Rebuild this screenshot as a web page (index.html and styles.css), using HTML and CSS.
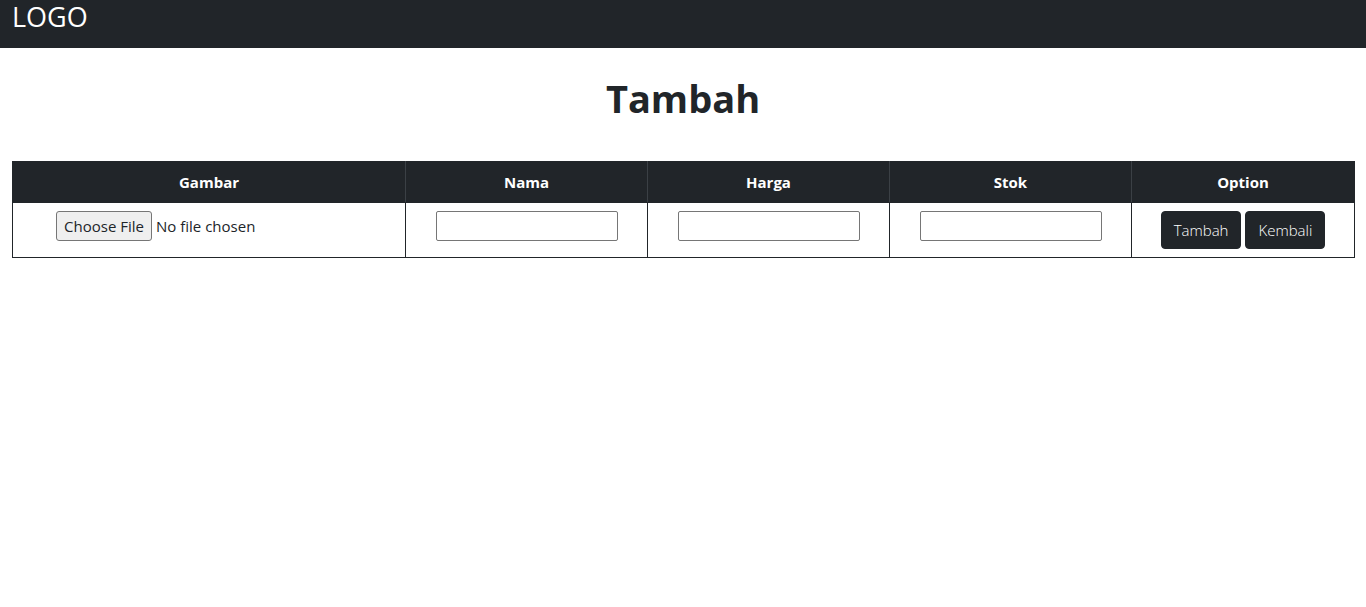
FILE: index.html
```html
<!DOCTYPE html>
<html lang="id">
<head>
<meta charset="utf-8">
<title>Tambah</title>
<link rel="stylesheet" href="styles.css">
</head>
<body>
<nav class="navbar"><span class="brand">LOGO</span></nav>
<main class="content">
  <h1 class="title">Tambah</h1>
  <table class="table">
    <colgroup>
      <col class="c-gambar"><col class="c-mid"><col class="c-mid"><col class="c-mid"><col class="c-opt">
    </colgroup>
    <thead>
      <tr><th>Gambar</th><th>Nama</th><th>Harga</th><th>Stok</th><th>Option</th></tr>
    </thead>
    <tbody>
      <tr>
        <td class="cell-file">
          <label class="file"><span class="file-btn">Choose File</span><span class="file-name">No file chosen</span></label>
        </td>
        <td><input class="field" type="text"></td>
        <td><input class="field" type="text"></td>
        <td><input class="field" type="text"></td>
        <td><div class="actions"><button class="btn">Tambah</button><button class="btn">Kembali</button></div></td>
      </tr>
    </tbody>
  </table>
</main>
</body>
</html>
```
FILE: styles.css
```css
* { box-sizing: border-box; }
body {
  margin: 0;
  font-family: "Open Sans", "Noto Sans", sans-serif;
  color: #212529;
  background: #fff;
  font-size: 16px;
  line-height: 1.5;
}
.navbar {
  height: 48px;
  background: #212529;
  padding: 0 12px;
}
.brand {
  color: #fff;
  font-size: 27px;
  line-height: 34px;
  display: block;
}
.content { padding: 0 12px; }
.title {
  margin: 27px 0 40px;
  text-align: center;
  font-size: 38px;
  line-height: 46px;
  font-weight: 700;
}
.table {
  width: 100%;
  border-collapse: collapse;
  table-layout: fixed;
  border: 1px solid #212529;
}
.c-gambar { width: 393px; }
.c-mid { width: 242px; }
.c-opt { width: 223px; }
th {
  background: #212529;
  color: #fff;
  font-size: 15px;
  font-weight: 700;
  line-height: 24px;
  padding: 8px;
  border-left: 1px solid #3b4045;
  border-bottom: 1px solid #212529;
}
th:first-child { border-left: 1px solid #212529; }
td {
  padding: 8px;
  text-align: center;
  vertical-align: top;
  border: 1px solid #212529;
}
.cell-file { text-align: left; padding-left: 43px; }
.file { display: inline-flex; align-items: center; gap: 4px; font-size: 15px; }
.file-btn {
  display: inline-block;
  height: 30px;
  width: 96px;
  line-height: 28px;
  text-align: center;
  background: #efefef;
  border: 1px solid #767676;
  border-radius: 3px;
  color: #212529;
}
.file-name { color: #212529; }
.field {
  width: 182px;
  height: 30px;
  border: 1px solid #767676;
  border-radius: 2px;
  padding: 2px 4px;
  font: inherit;
  display: block;
  margin: 0 auto;
}
.actions { display: flex; justify-content: center; gap: 4px; }
.btn {
  background: #212529;
  color: #fff;
  border: 1px solid #212529;
  border-radius: 4px;
  padding: 6px 12px;
  font-family: inherit;
  font-size: 15px;
  font-weight: 300;
  line-height: 24px;
  height: 38px;
}
```
